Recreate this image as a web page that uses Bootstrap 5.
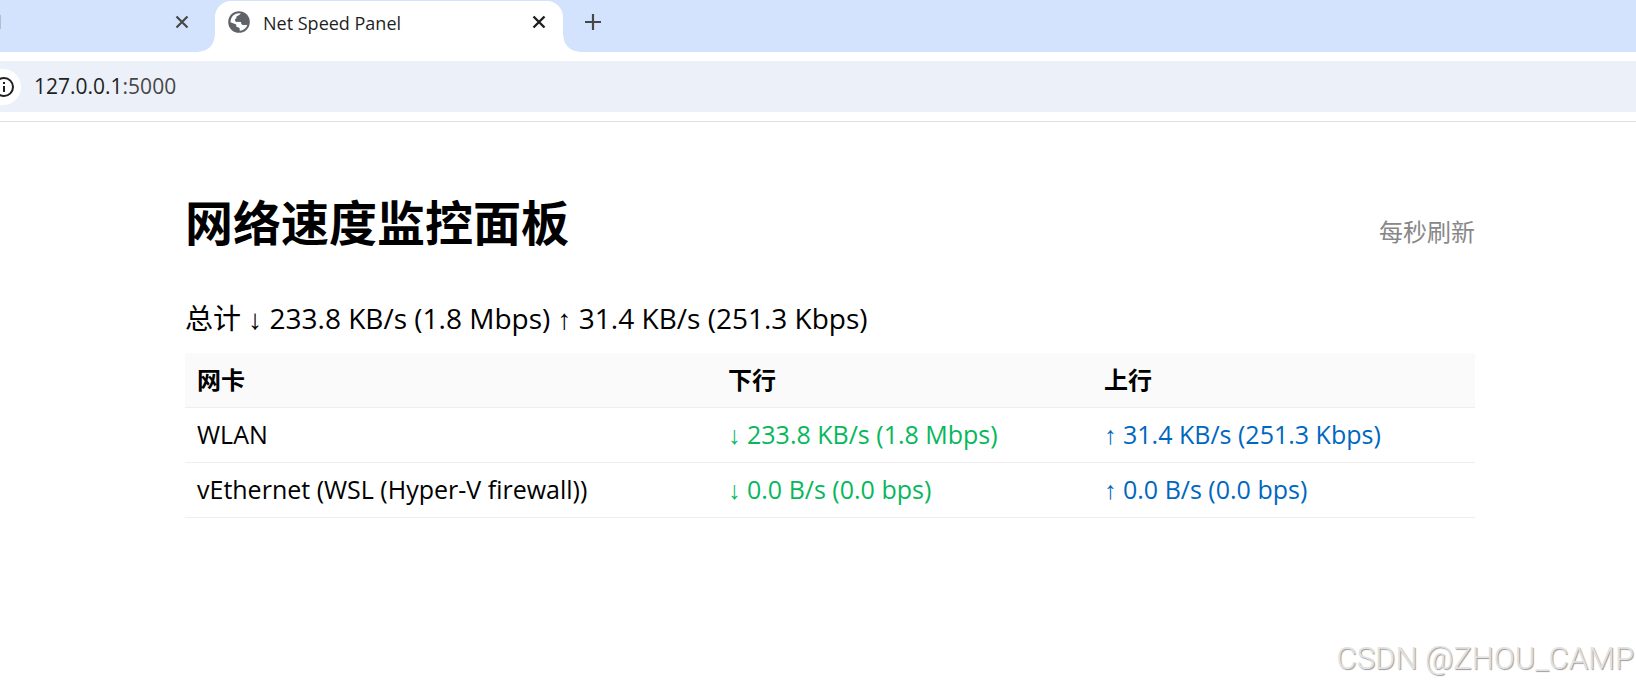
<!DOCTYPE html>
<html lang="zh-CN">
<head>
<meta charset="utf-8">
<meta name="viewport" content="width=device-width, initial-scale=1">
<title>Net Speed Panel</title>
<link href="https://cdn.jsdelivr.net/npm/bootstrap@5.3.0/dist/css/bootstrap.min.css" rel="stylesheet">
<style>
body { font-family: "Open Sans", "Noto Sans CJK SC", sans-serif; color: #000; background: #fff; }
button { color: #474747; }
.tab-strip { background: #d3e3fd; height: 52px; padding-top: 1px; }
.tab-prev { width: 215px; padding-right: 24px; }
.tab-prev-mark { width: 1px; height: 14px; background: #b5bccb; }
.tab-current { width: 348px; padding: 0 15px 9px 13px; background: #fff; border-radius: 16px 16px 0 0; }
.tab-current::before, .tab-current::after { content: ""; position: absolute; bottom: 0; width: 16px; height: 16px; }
.tab-current::before { right: 100%; background: radial-gradient(circle at 0 0, #d3e3fd 15px, #fff 16px); }
.tab-current::after { left: 100%; background: radial-gradient(circle at 100% 0, #d3e3fd 15px, #fff 16px); }
.tab-current button { color: #1f1f1f; }
.tab-name { font-size: 18px; line-height: 24px; color: #1f1f1f; margin-left: 13px; padding-top: 2px; }
.tab-new { margin-left: 21px; }
.strip-item { padding-bottom: 9px; }
.toolbar { padding: 9px 0; border-bottom: 1px solid #dfe1e5; }
.address { background: #ecf0f9; height: 51px; }
.site-info { width: 21px; height: 36px; background: #fff; border-radius: 0 18px 18px 0; }
.address-text { font-size: 21px; line-height: 28px; margin-left: 13px; padding-bottom: 2px; color: #474747; }
.address-text span { color: #1f1f1f; }
.panel { padding: 65px 161px 0 185px; }
h1 { font-size: 48px; line-height: 72px; }
.refresh-note { font-size: 24px; line-height: 36px; color: #888; }
.total { font-size: 28px; line-height: 36px; margin-top: 41px; margin-bottom: 17px; }
.arrow { font-family: "Liberation Sans", sans-serif; line-height: 1; }
.speed-table { table-layout: fixed; font-size: 25px; line-height: 30px; }
.speed-table th, .speed-table td { padding: 12px; border-bottom: 1px solid #eee; }
.speed-table td { padding: 11px 12px 13px; }
.speed-table th { background: #fafafa; font-size: 24px; }
.col-down { width: 376px; }
.col-up { width: 383px; }
.down { color: #07b75c; }
.up { color: #0067c0; }
.watermark { font-family: Roboto, sans-serif; font-weight: 300; font-size: 31px; line-height: 40px; color: #e2e2e2; text-shadow: 1px 1px 1px #999; padding: 0 2px 8px 0; }
</style>
</head>
<body class="d-flex flex-column min-vh-100 overflow-x-hidden">
<header>
  <div class="tab-strip d-flex">
    <div class="tab-prev strip-item d-flex align-items-center justify-content-between">
      <span class="tab-prev-mark"></span>
      <button type="button" class="btn p-0 border-0 d-flex" aria-label="Close tab">
        <svg width="18" height="18" viewBox="0 0 18 18" fill="none" stroke="#474747" stroke-width="2.200"><path d="M3.5 3.5l11 11M14.5 3.5l-11 11"/></svg>
      </button>
    </div>
    <div class="tab-current position-relative d-flex align-items-center">
      <svg width="22" height="22" viewBox="0 0 22 22"><circle cx="11" cy="11" r="10.8" fill="#5f6368"/><path fill="#fff" d="M12.7 2.4c-.4 1.2-.4 2.1-1.5 2.6-1 .4-2.300.3-2.300 1.500v1.100c0 1-1.800.8-1.800 1.900 0 .9.8 1.200 1.900 1.200h3.100c1.200 0 1.600 1 1.600 2.100 0 .7.600 1 1.500 1h4.100c-.3 1.300-.9 2.400-1.700 3.300-1.600 1.600-3.600 2.600-5.900 2.700v-1.900c0-.9-.9-1.700-1.900-1.700-1.100 0-1.600-.6-1.600-1.600v-1.200L2.500 11.200c0-.6 0-1.200.2-1.700C3.400 5.300 6.800 2.300 11 2.300z" fill-rule="evenodd"/><path fill="#5f6368" d="M8.500 5.500L14.500 2v3.200c-1 0-1.300.6-1.300 1.600H15c1 0 1.500.7 1.500 1.700h2.900l.3 5.300h-4.500c-1.100 0-1.900-.8-1.900-1.900 0-1-.6-1.500-1.600-1.500H8.900c-1 0-1.900-.8-1.900-1.800 0-.7.500-1.100 1.200-1.200z"/></svg>
      <span class="tab-name flex-grow-1">Net Speed Panel</span>
      <button type="button" class="btn p-0 border-0 d-flex" aria-label="Close tab">
        <svg width="18" height="18" viewBox="0 0 18 18" fill="none" stroke="#1f1f1f" stroke-width="2.400"><path d="M3.500 3.500l11 11M14.500 3.500l-11 11"/></svg>
      </button>
    </div>
    <div class="strip-item tab-new d-flex align-items-center">
      <button type="button" class="btn p-0 border-0 d-flex" aria-label="New tab">
        <svg width="18" height="18" viewBox="0 0 18 18" fill="none" stroke="#474747" stroke-width="2.200"><path d="M9 1v16M1 9h16"/></svg>
      </button>
    </div>
  </div>
  <div class="toolbar">
    <div class="address d-flex align-items-center">
      <button type="button" class="site-info btn p-0 border-0 d-flex align-items-center" aria-label="Site information">
        <svg width="14" height="20" viewBox="6 0 14 20" fill="none" stroke="#1f1f1f" stroke-width="2"><circle cx="10" cy="10" r="9"/><path d="M10 9v6M10 5v2"/></svg>
      </button>
      <div class="address-text"><span>127.0.0.1</span>:5000</div>
    </div>
  </div>
</header>
<main class="panel">
  <div class="d-flex justify-content-between align-items-baseline">
    <h1 class="fw-bold mb-0">网络速度监控面板</h1>
    <div class="refresh-note">每秒刷新</div>
  </div>
  <div class="total">总计 <span class="arrow">↓</span> 233.8 KB/s (1.8 Mbps) <span class="arrow">↑</span> 31.4 KB/s (251.3 Kbps)</div>
  <table class="speed-table w-100">
    <colgroup><col><col class="col-down"><col class="col-up"></colgroup>
    <thead><tr><th scope="col">网卡</th><th scope="col">下行</th><th scope="col">上行</th></tr></thead>
    <tbody>
      <tr><td>WLAN</td><td class="down"><span class="arrow">↓</span> 233.8 KB/s (1.8 Mbps)</td><td class="up"><span class="arrow">↑</span> 31.4 KB/s (251.3 Kbps)</td></tr>
      <tr><td>vEthernet (WSL (Hyper-V firewall))</td><td class="down"><span class="arrow">↓</span> 0.0 B/s (0.0 bps)</td><td class="up"><span class="arrow">↑</span> 0.0 B/s (0.0 bps)</td></tr>
    </tbody>
  </table>
</main>
<footer class="watermark mt-auto align-self-end">CSDN @ZHOU_CAMP</footer>
<script src="https://cdn.jsdelivr.net/npm/bootstrap@5.3.0/dist/js/bootstrap.bundle.min.js"></script>
</body>
</html>
